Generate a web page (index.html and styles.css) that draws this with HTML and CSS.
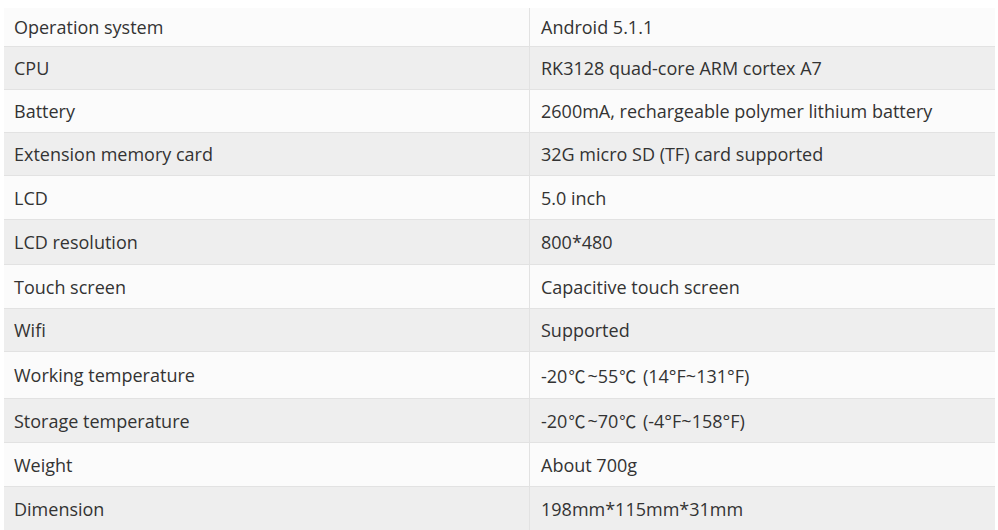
FILE: index.html
```html
<!DOCTYPE html>
<html>
<head>
<meta charset="utf-8">
<link rel="stylesheet" href="styles.css">
</head>
<body>
<table class="specs">
<tbody>
<tr class="first"><td class="k">Operation system</td><td class="v">Android 5.1.1</td></tr>
<tr class="short"><td class="k">CPU</td><td class="v">RK3128 quad-core ARM cortex A7</td></tr>
<tr class="short"><td class="k">Battery</td><td class="v">2600mA, rechargeable polymer lithium battery</td></tr>
<tr class="short"><td class="k">Extension memory card</td><td class="v">32G micro SD (TF) card supported</td></tr>
<tr><td class="k">LCD</td><td class="v">5.0 inch</td></tr>
<tr class="tall"><td class="k">LCD resolution</td><td class="v">800*480</td></tr>
<tr><td class="k">Touch screen</td><td class="v">Capacitive touch screen</td></tr>
<tr class="short"><td class="k">Wifi</td><td class="v">Supported</td></tr>
<tr class="taller"><td class="k">Working temperature</td><td class="v">-20<span class="deg">℃</span>~55<span class="deg">℃</span> (14°F~131°F)</td></tr>
<tr><td class="k">Storage temperature</td><td class="v">-20<span class="deg">℃</span>~70<span class="deg">℃</span> (-4°F~158°F)</td></tr>
<tr><td class="k">Weight</td><td class="v">About 700g</td></tr>
<tr><td class="k">Dimension</td><td class="v">198mm*115mm*31mm</td></tr>
</tbody>
</table>
</body>
</html>
```
FILE: styles.css
```css
html, body {
  margin: 0;
  padding: 0;
  background: #ffffff;
  overflow: hidden;
}
body {
  padding: 8px 3px 0 4px;
}
.specs {
  width: 991px;
  border-collapse: collapse;
  table-layout: fixed;
  font-family: "Open Sans", "Noto Sans", sans-serif;
  font-size: 18px;
  color: #333333;
}
.specs td {
  height: 43px;
  padding: 0 10px;
  border-bottom: 1px solid #e2e2e2;
  vertical-align: middle;
  white-space: nowrap;
}
.specs tr.first td {
  height: 38px;
}
.specs tr.short td {
  height: 42px;
}
.specs tr.tall td {
  height: 44px;
}
.specs tr.taller td {
  height: 46px;
}
.specs tr:nth-child(odd) td {
  background: #fbfbfb;
}
.specs tr:nth-child(even) td {
  background: #eeeeee;
}
.specs td.k {
  width: 505px;
  border-right: 1px solid #e2e2e2;
}
.specs td.v {
  padding-left: 11px;
}
.deg {
  font-family: "Noto Sans CJK SC", "Open Sans", sans-serif;
  font-size: 17px;
  margin: 0 2px 0 1px;
}
```
